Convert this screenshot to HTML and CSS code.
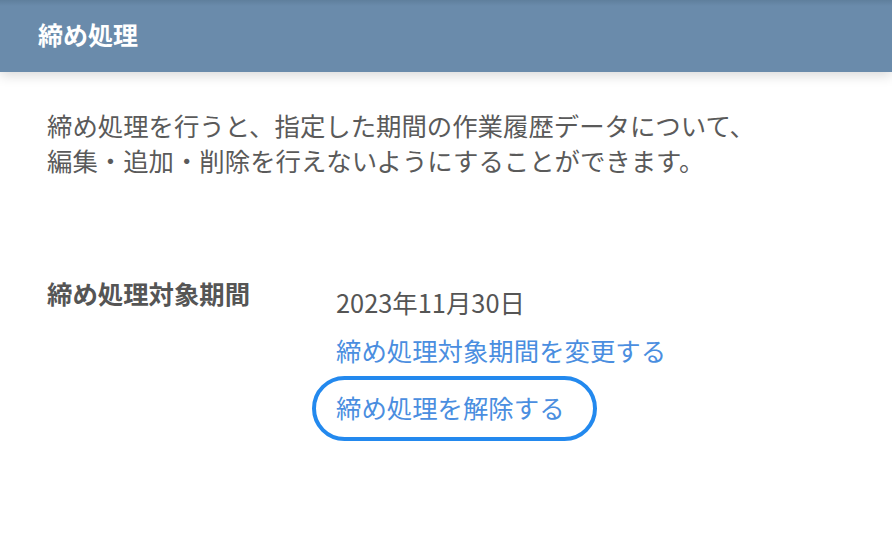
FILE: index.html
```html
<!DOCTYPE html>
<html lang="ja">
<head>
<meta charset="utf-8">
<link rel="stylesheet" href="styles.css">
</head>
<body>
<header class="header"><h1 class="title">締め処理</h1></header>
<main class="content">
  <p class="desc">締め処理を行うと、指定した期間の作業履歴データについて、<br>編集・追加・削除を行えないようにすることができます。</p>
  <div class="row">
    <div class="label">締め処理対象期間</div>
    <div class="values">
      <div class="date">2023年11月30日</div>
      <a class="link" href="#">締め処理対象期間を変更する</a>
      <span class="circled"><a class="link" href="#">締め処理を解除する</a></span>
    </div>
  </div>
</main>
</body>
</html>
```
FILE: styles.css
```css
html, body {
  margin: 0;
  padding: 0;
  background: #ffffff;
  font-family: "Noto Sans CJK JP", "Noto Sans", sans-serif;
}
.header {
  height: 72px;
  background: linear-gradient(to bottom, #5f7f9c 0px, #6a8bab 6px, #6a8bab 100%);
  display: flex;
  align-items: center;
  padding: 0 0 4px 38px;
  box-sizing: border-box;
  box-shadow: 0 3px 12px rgba(0, 0, 0, 0.16);
  position: relative;
}
.title {
  margin: 0;
  color: #ffffff;
  font-size: 25px;
  font-weight: 700;
  line-height: 30px;
}
.content {
  padding: 36px 0 0 47px;
}
.desc {
  margin: 0;
  color: #5a5a5a;
  font-size: 25.4px;
  line-height: 35px;
}
.row {
  display: flex;
  margin-top: 103px;
}
.label {
  width: 289px;
  color: #555555;
  font-size: 25.4px;
  font-weight: 700;
  line-height: 35px;
  margin-top: -5px;
}
.values {
  display: flex;
  flex-direction: column;
  align-items: flex-start;
  font-size: 25.4px;
  line-height: 35px;
  padding-top: 4px;
}
.date {
  color: #555555;
}
.link {
  color: #4a8ee0;
  text-decoration: none;
  margin-top: 13px;
}
.circled {
  margin-top: 8px;
  margin-left: -24px;
  border: 4px solid #2389ee;
  border-radius: 40px;
  padding: 10px 28px 12px 20px;
  display: inline-block;
}
.circled .link {
  margin-top: 0;
  display: block;
}
```
